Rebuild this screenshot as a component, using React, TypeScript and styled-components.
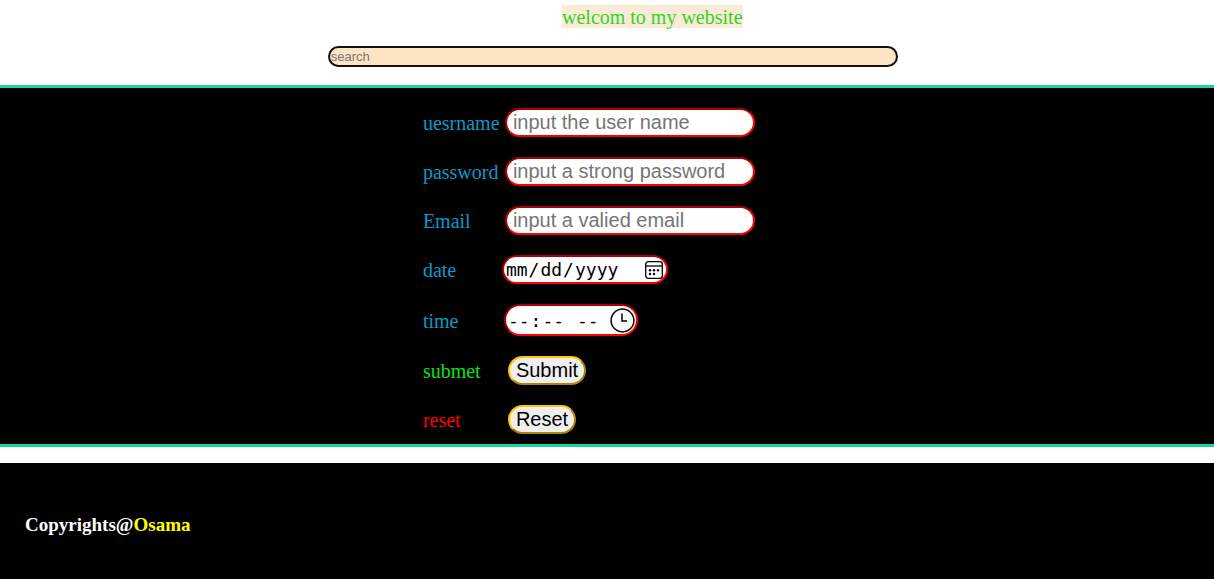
import React from 'react';
import styled, { createGlobalStyle } from 'styled-components';

const GlobalStyle = createGlobalStyle`
  *, *::before, *::after { box-sizing: border-box; }
  body {
    margin: 0;
    background: #fff;
    font: 20px/22px "Liberation Serif", "Times New Roman", serif;
  }
`;

const Header = styled.header`
  display: flex;
  flex-direction: column;
  align-items: flex-start;
  gap: 18px;
  padding: 5px 0 18px;
`;

const Welcome = styled.span`
  margin-left: calc(50% - 45px);
  padding-top: 1px;
  background: antiquewhite;
  color: #32d41e;
`;

const Search = styled.input`
  width: 47%;
  height: 21px;
  margin-left: 27%;
  padding: 1px;
  border: 2px solid #111;
  border-radius: 20px;
  background: #ffe4c4;
  font: 13px "Liberation Sans", Arial, sans-serif;
`;

const Form = styled.form`
  display: flex;
  flex-direction: column;
  gap: 20px;
  padding: 20px 0 10px calc(35% - 2px);
  border: solid #10d9a0;
  border-width: 3px 0;
  background: #000;
`;

const Row = styled.div<{ $labelWidth: number }>`
  display: grid;
  grid-template-columns: ${({ $labelWidth }) => $labelWidth}px auto;
  justify-content: start;
  align-items: center;
`;

const Label = styled.label<{ $color?: string }>`
  padding-top: 1px;
  color: ${({ $color }) => $color ?? '#0c98c8'};
`;

const Field = styled.input`
  width: 250px;
  height: 29px;
  padding: 1px 6px;
  border: 2px inset red;
  border-radius: 20px;
  background: #fff;
  font: 20px "Liberation Sans", Arial, sans-serif;
`;

const Picker = styled.div<{ $width: number; $height: number; $iconGap: number }>`
  display: flex;
  align-items: center;
  width: ${({ $width }) => $width}px;
  height: ${({ $height }) => $height}px;
  padding-right: ${({ $iconGap }) => $iconGap}px;
  border: 2px inset red;
  border-radius: 20px;
  background: #fff;

  svg {
    flex: none;
    fill: none;
    stroke: #000;
  }
`;

const PickerInput = styled.input`
  flex: 1;
  min-width: 0;
  height: 25px;
  padding: 0 1px;
  border: 0;
  background: transparent;
  font: 18px "DejaVu Sans Mono", monospace;

  &::-webkit-calendar-picker-indicator {
    display: none;
  }
`;

const Button = styled.button`
  height: 29px;
  padding: 1px 6px;
  border: 2px outset #ffc800;
  border-radius: 20px;
  background: #efefef;
  color: #000;
  font: 20px "Liberation Sans", Arial, sans-serif;
`;

const Footer = styled.footer`
  margin-top: 16px;
  padding: 51px 25px 43px;
  background: #000;
  color: #fff;
`;

const Copyright = styled.p`
  margin: 0;
  font-size: 19px;
  font-weight: bold;
`;

const Owner = styled.span`
  color: yellow;
`;

const TEXT_LABEL = 82;
const DATE_LABEL = 79;
const TIME_LABEL = 81;
const BUTTON_LABEL = 85;

function CalendarIcon() {
  return (
    <svg width="18" height="18" viewBox="0 0 18 18" strokeWidth="1.3" aria-hidden="true">
      <rect x="0.7" y="0.7" width="16.6" height="16.6" rx="2.6" />
      <path d="M0.7 5h16.6" />
      <g fill="#000" stroke="none">
        <circle cx="9" cy="9.2" r="1.2" />
        <circle cx="13" cy="9.2" r="1.2" />
        <circle cx="5" cy="9.2" r="1.2" />
        <circle cx="5" cy="13" r="1.2" />
        <circle cx="9" cy="13" r="1.2" />
      </g>
    </svg>
  );
}

function ClockIcon() {
  return (
    <svg width="25" height="25" viewBox="0 0 25 25" strokeWidth="1.5" aria-hidden="true">
      <circle cx="12.5" cy="12.5" r="11.4" />
      <path d="M12 5.5v7.5h5" />
    </svg>
  );
}

export default function App() {
  return (
    <>
      <GlobalStyle />
      <Header>
        <Welcome>welcom to my website</Welcome>
        <Search type="search" placeholder="search" aria-label="search" />
      </Header>
      <Form onSubmit={(event) => event.preventDefault()}>
        <Row $labelWidth={TEXT_LABEL}>
          <Label htmlFor="username">uesrname</Label>
          <Field id="username" type="text" placeholder="input the user name" />
        </Row>
        <Row $labelWidth={TEXT_LABEL}>
          <Label htmlFor="password">password</Label>
          <Field id="password" type="password" placeholder="input a strong password" />
        </Row>
        <Row $labelWidth={TEXT_LABEL}>
          <Label htmlFor="email">Email</Label>
          <Field id="email" type="email" placeholder="input a valied email" />
        </Row>
        <Row $labelWidth={DATE_LABEL}>
          <Label htmlFor="date">date</Label>
          <Picker $width={166} $height={29} $iconGap={3}>
            <PickerInput id="date" type="date" />
            <CalendarIcon />
          </Picker>
        </Row>
        <Row $labelWidth={TIME_LABEL}>
          <Label htmlFor="time">time</Label>
          <Picker $width={134} $height={32} $iconGap={1}>
            <PickerInput id="time" type="time" />
            <ClockIcon />
          </Picker>
        </Row>
        <Row $labelWidth={BUTTON_LABEL}>
          <Label htmlFor="submit" $color="#0fe01e">submet</Label>
          <Button id="submit" type="submit">Submit</Button>
        </Row>
        <Row $labelWidth={BUTTON_LABEL}>
          <Label htmlFor="reset" $color="#f00">reset</Label>
          <Button id="reset" type="reset">Reset</Button>
        </Row>
      </Form>
      <Footer>
        <Copyright>Copyrights@<Owner>Osama</Owner></Copyright>
      </Footer>
    </>
  );
}
